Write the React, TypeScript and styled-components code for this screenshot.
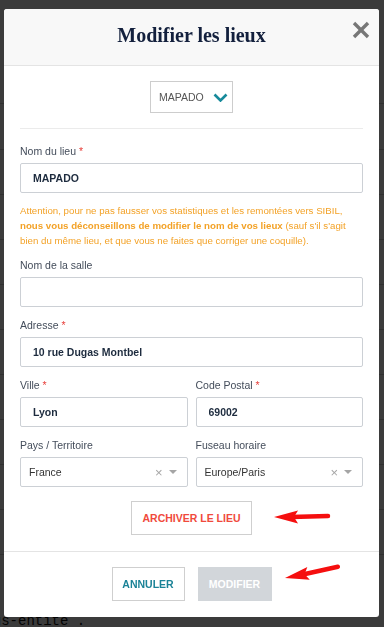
import React from 'react';
import styled, { createGlobalStyle } from 'styled-components';

const GlobalStyle = createGlobalStyle`
  html, body {
    margin: 0;
    padding: 0;
  }
  body {
    font-family: "Liberation Sans", Arial, sans-serif;
    background: #fff;
  }
  * {
    box-sizing: border-box;
  }
`;

interface IArrowProps {
  tilt?: number;
}

const RedArrow = ({ tilt = 0 }: IArrowProps) => (
  <ArrowSvg width="60" height="16" viewBox="0 0 60 16" style={{ transform: `rotate(${tilt}deg)` }}>
    <line x1="18" y1="8" x2="55" y2="7" stroke="#f50f0f" strokeWidth="4.5" strokeLinecap="round" />
    <polygon points="1,8 25,1.5 21,8 25,14.5" fill="#f50f0f" />
  </ArrowSvg>
);

const Chevron = () => (
  <svg width="15" height="9" viewBox="0 0 15 9">
    <polyline points="1.5,1.5 7.5,7.5 13.5,1.5" fill="none" stroke="#178a9b" strokeWidth="2.6" />
  </svg>
);

const CloseIcon = () => (
  <svg width="18" height="18" viewBox="0 0 18 18">
    <line x1="2" y1="2" x2="16" y2="16" stroke="#777" strokeWidth="3.4" />
    <line x1="16" y1="2" x2="2" y2="16" stroke="#777" strokeWidth="3.4" />
  </svg>
);

interface IFieldProps {
  label: string;
  required?: boolean;
  children: React.ReactNode;
}

const Field = ({ label, required, children }: IFieldProps) => (
  <FieldWrapper>
    <Label>
      {label}
      {required && <Required> *</Required>}
    </Label>
    {children}
  </FieldWrapper>
);

const SelectBox = ({ value }: { value: string }) => (
  <SelectWrapper>
    <SelectValue>{value}</SelectValue>
    <ClearMark>×</ClearMark>
    <Caret />
  </SelectWrapper>
);

const backRows = [44, 46, 45, 45, 45, 45, 45, 45, 45, 45, 45];

export default function App() {
  return (
    <>
      <GlobalStyle />
      <BackPage>
        {backRows.map((h, i) => (
          <BackRow key={i} style={{ height: h }} />
        ))}
        <BackFooter>sous-entité .</BackFooter>
      </BackPage>

      <Overlay>
        <Modal>
          <Header>
            <Title>Modifier les lieux</Title>
            <CloseButton aria-label="Fermer">
              <CloseIcon />
            </CloseButton>
          </Header>

          <Body>
            <SiteSelect>
              <SiteName>MAPADO</SiteName>
              <Chevron />
            </SiteSelect>
            <Divider />

            <Field label="Nom du lieu" required>
              <TextInput readOnly value="MAPADO" />
            </Field>
            <Warning>
              Attention, pour ne pas fausser vos statistiques et les remontées vers SIBIL,{' '}
              <strong>nous vous déconseillons de modifier le nom de vos lieux</strong> (sauf s'il s'agit
              bien du même lieu, et que vous ne faites que corriger une coquille).
            </Warning>

            <Field label="Nom de la salle">
              <TextInput readOnly value="" />
            </Field>
            <Field label="Adresse" required>
              <TextInput readOnly value="10 rue Dugas Montbel" />
            </Field>

            <TwoColumns>
              <Field label="Ville" required>
                <TextInput readOnly value="Lyon" />
              </Field>
              <Field label="Code Postal" required>
                <TextInput readOnly value="69002" />
              </Field>
            </TwoColumns>

            <TwoColumns>
              <Field label="Pays / Territoire">
                <SelectBox value="France" />
              </Field>
              <Field label="Fuseau horaire">
                <SelectBox value="Europe/Paris" />
              </Field>
            </TwoColumns>

            <ArchiveRow>
              <ArrowAnchor>
                <OutlineButton $color="#f04a3c" $width={121}>Archiver le lieu</OutlineButton>
                <ArrowSpot $left={142} $top={8}>
                  <RedArrow />
                </ArrowSpot>
              </ArrowAnchor>
            </ArchiveRow>
          </Body>

          <Footer>
            <OutlineButton $color="#1b8397" $width={73}>Annuler</OutlineButton>
            <ArrowAnchor>
              <DisabledButton disabled>Modifier</DisabledButton>
              <ArrowSpot $left={86} $top={3}>
                <RedArrow tilt={-11} />
              </ArrowSpot>
            </ArrowAnchor>
          </Footer>
        </Modal>
      </Overlay>
    </>
  );
}

// Background page

const BackPage = styled.div`
  height: 627px;
  overflow: hidden;
  padding-top: 60px;
`;

const BackRow = styled.div`
  border-bottom: 1px solid #cfcfcf;
`;

const BackFooter = styled.div`
  margin: 58px 0 0 -24px;
  font-family: "Liberation Mono", "DejaVu Sans Mono", monospace;
  font-size: 14px;
  color: #111;
  white-space: nowrap;
`;

// Modal

const Overlay = styled.div`
  position: fixed;
  inset: 0;
  background: rgba(0, 0, 0, 0.77);
  display: flex;
  justify-content: center;
  align-items: flex-start;
  padding: 9px 5px 0 4px;
`;

const Modal = styled.div`
  position: relative;
  width: 375px;
  background: #fff;
  border-radius: 3px;
  overflow: hidden;
`;

const Header = styled.div`
  height: 57px;
  background: #f8f8f8;
  border-bottom: 1px solid #e4e4e4;
  display: flex;
  align-items: center;
  justify-content: center;
  padding-bottom: 4px;
`;

const Title = styled.h2`
  margin: 0;
  font-family: "Liberation Serif", "DejaVu Serif", serif;
  font-weight: 700;
  font-size: 20px;
  color: #13203d;
`;

const CloseButton = styled.button`
  position: absolute;
  top: 12px;
  right: 9px;
  padding: 0;
  border: none;
  background: none;
  display: flex;
  cursor: pointer;
`;

const Body = styled.div`
  padding: 15px 16px 16px;
`;

const SiteSelect = styled.div`
  width: 83px;
  height: 32px;
  margin: 0 auto;
  border: 1px solid #cdcdcd;
  display: flex;
  align-items: center;
  gap: 9px;
  padding-left: 8px;
`;

const SiteName = styled.span`
  font-size: 10.5px;
  color: #555;
`;

const Divider = styled.hr`
  border: none;
  border-top: 1px solid #ebebeb;
  margin: 15px 0 14px;
`;

const FieldWrapper = styled.div`
  margin-bottom: 10px;
`;

const Label = styled.div`
  font-size: 10.5px;
  line-height: 16px;
  color: #444d5b;
  margin-bottom: 4px;
`;

const Required = styled.span`
  color: #e8413c;
`;

const TextInput = styled.input`
  display: block;
  width: 100%;
  height: 30px;
  border: 1px solid #ccd0d5;
  border-radius: 2px;
  padding: 0 12px;
  font-family: "Liberation Sans", Arial, sans-serif;
  font-weight: 700;
  font-size: 10.5px;
  color: #1d2b3e;
  background: #fff;
  outline: none;
`;

const Warning = styled.p`
  margin: 9px 0 9px;
  font-size: 9.7px;
  line-height: 15px;
  color: #f3a227;

  strong {
    font-weight: 700;
  }
`;

const TwoColumns = styled.div`
  display: grid;
  grid-template-columns: 1fr 1fr;
  column-gap: 8px;
`;

const SelectWrapper = styled.div`
  height: 30px;
  border: 1px solid #ccd0d5;
  border-radius: 2px;
  display: flex;
  align-items: center;
  padding: 0 10px 0 8px;
`;

const SelectValue = styled.span`
  flex: 1;
  font-size: 10.5px;
  color: #333;
`;

const ClearMark = styled.span`
  font-size: 13px;
  color: #a5a5a5;
  margin-right: 6px;
  line-height: 1;
`;

const Caret = styled.span`
  width: 0;
  height: 0;
  border-left: 4px solid transparent;
  border-right: 4px solid transparent;
  border-top: 4px solid #a5a5a5;
`;

const ArchiveRow = styled.div`
  display: flex;
  justify-content: center;
  margin-top: 4px;
`;

const ArrowAnchor = styled.div`
  position: relative;
  display: inline-flex;
`;

const ArrowSpot = styled.div<{ $left: number; $top: number }>`
  position: absolute;
  left: ${(p) => p.$left}px;
  top: ${(p) => p.$top}px;
  display: flex;
`;

const ArrowSvg = styled.svg`
  transform-origin: 1px 8px;
`;

const OutlineButton = styled.button<{ $color: string; $width: number }>`
  width: ${(p) => p.$width}px;
  height: 34px;
  border: 1px solid #cfcfcf;
  background: #fff;
  color: ${(p) => p.$color};
  font-family: "Liberation Sans", Arial, sans-serif;
  font-weight: 700;
  font-size: 10.5px;
  text-transform: uppercase;
  padding: 0;
  cursor: pointer;
`;

const DisabledButton = styled.button`
  width: 74px;
  height: 34px;
  border: none;
  background: #d2d6da;
  color: #fff;
  font-family: "Liberation Sans", Arial, sans-serif;
  font-weight: 700;
  font-size: 10.5px;
  text-transform: uppercase;
  padding: 0;
`;

const Footer = styled.div`
  border-top: 1px solid #e4e4e4;
  padding: 15px 0 16px;
  display: flex;
  justify-content: center;
  gap: 13px;
`;
